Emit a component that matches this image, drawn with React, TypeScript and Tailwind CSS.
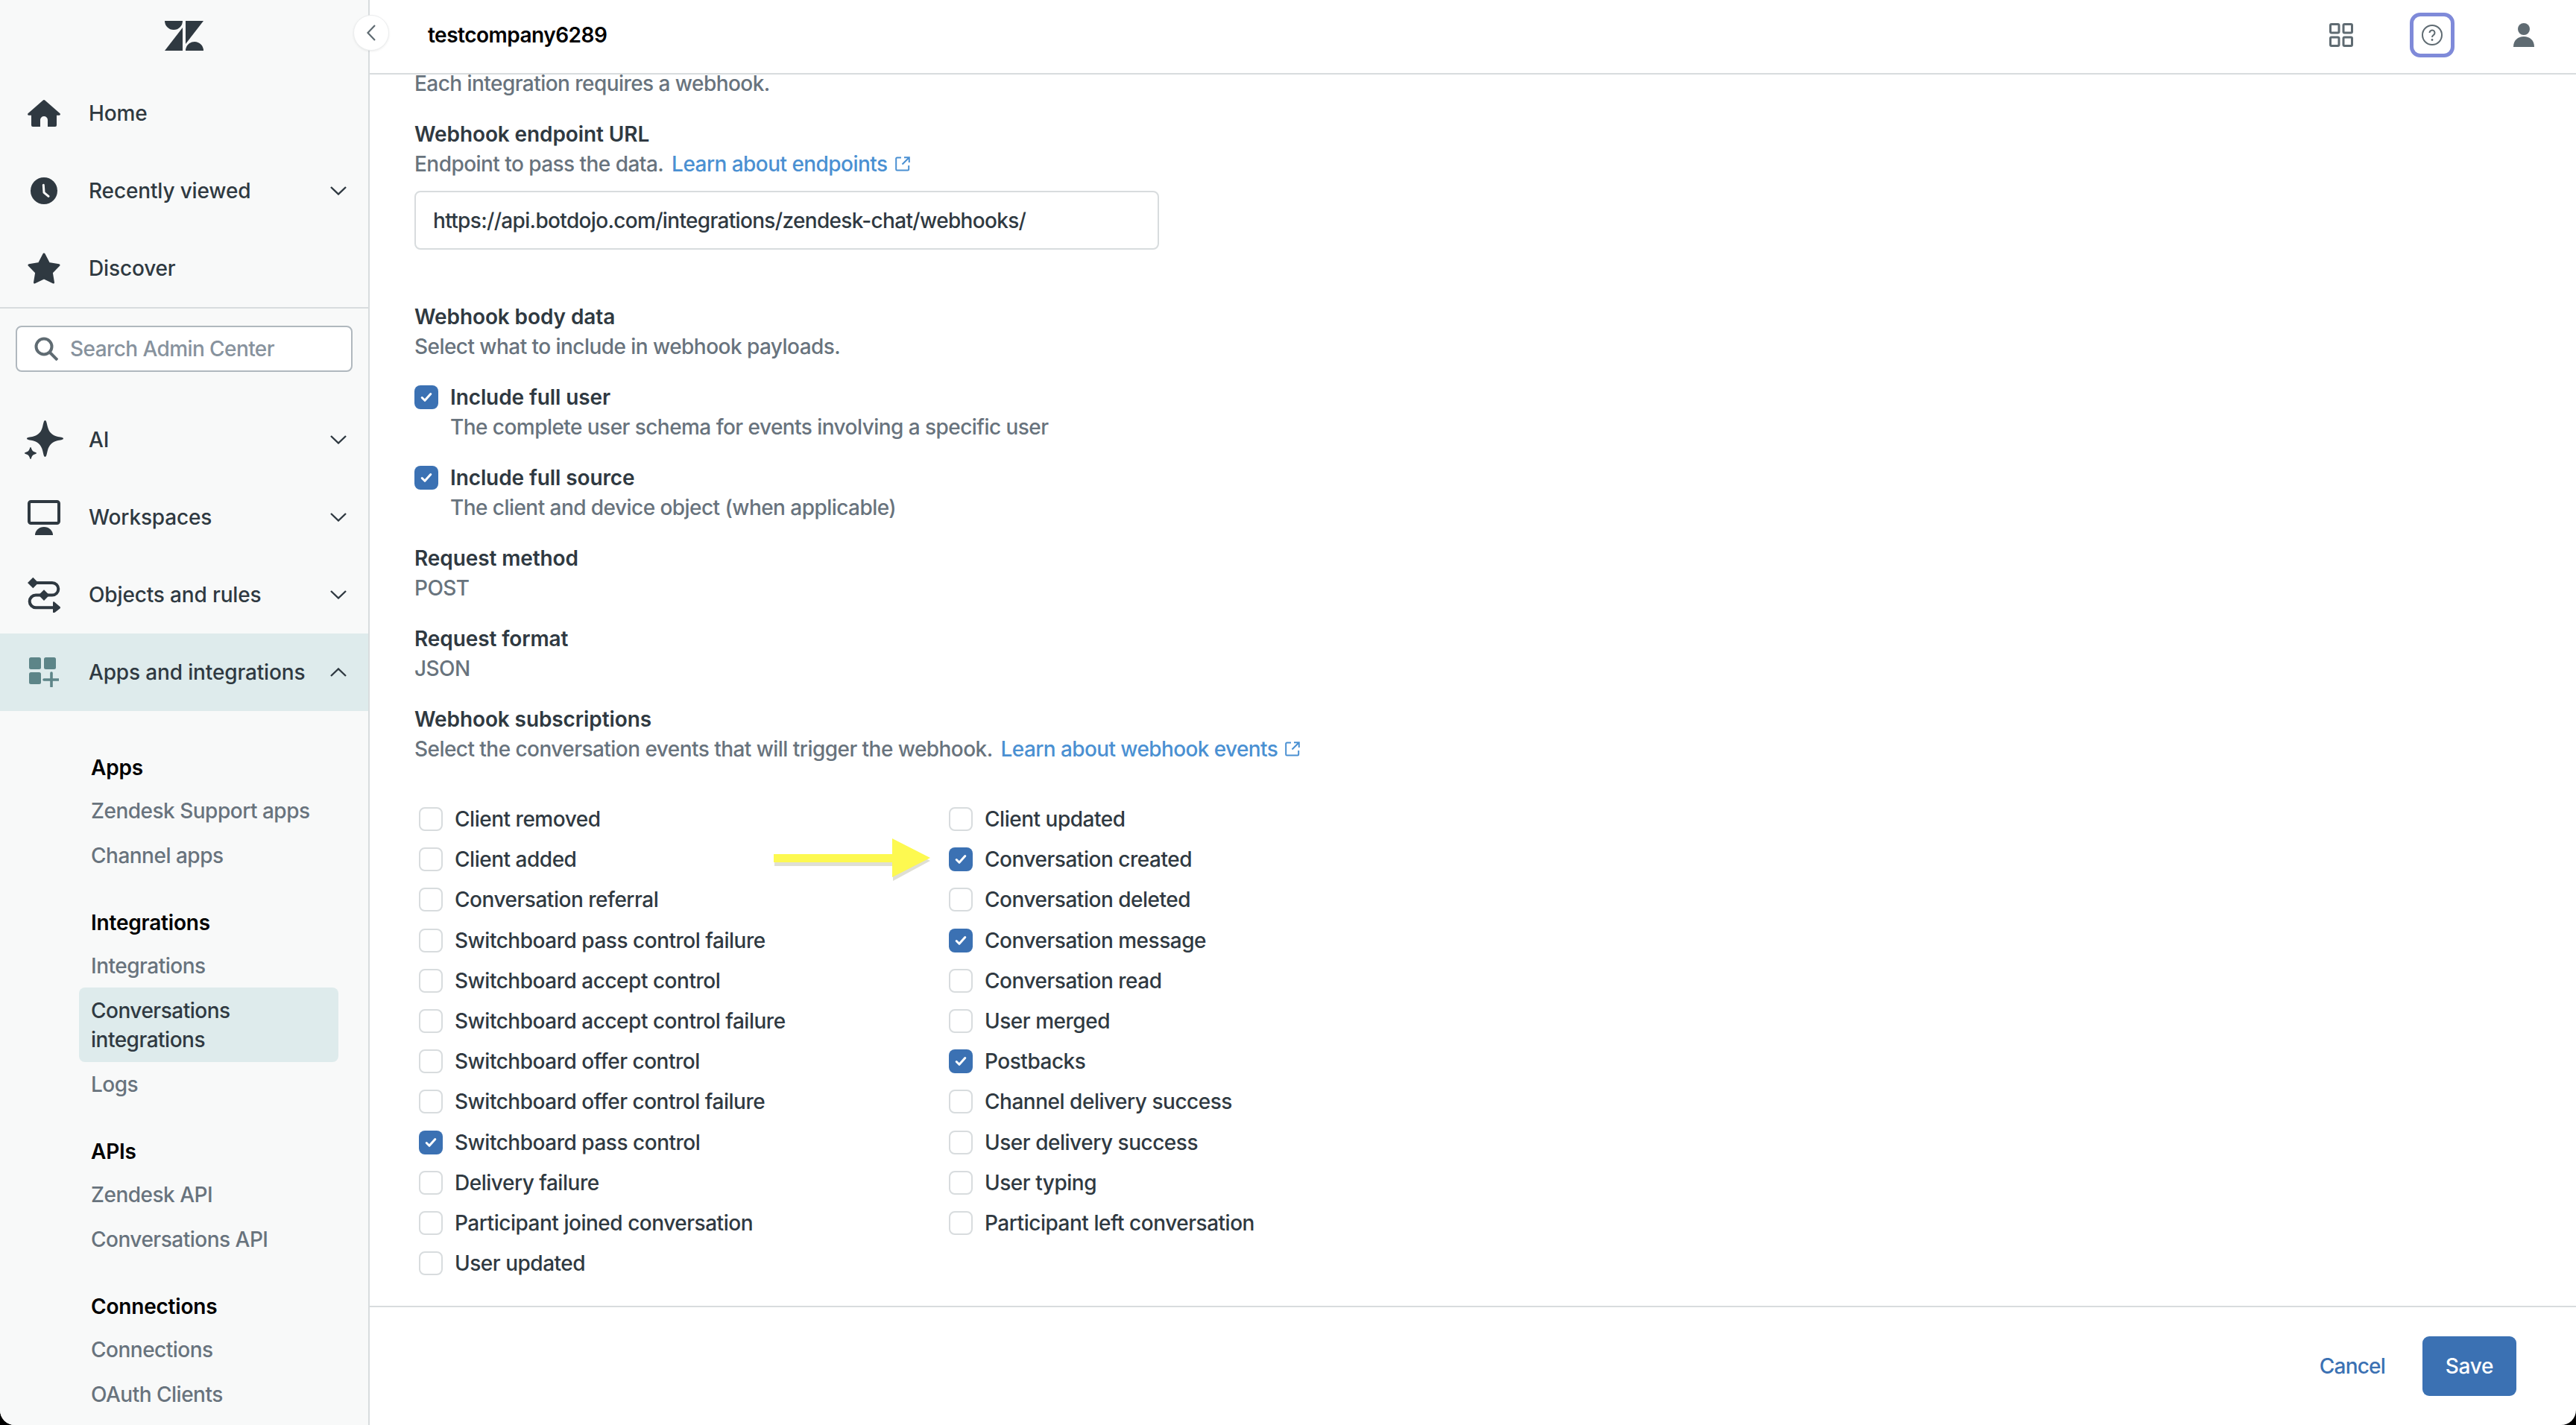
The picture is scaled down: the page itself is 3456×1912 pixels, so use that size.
import React from "react";

const Chevron = ({ up = false }: { up?: boolean }) => (
  <svg width="22" height="12" viewBox="0 0 22 12" fill="none" className="shrink-0">
    <path d={up ? "M1 11 11 1.5 21 11" : "M1 1 11 10.5 21 1"} stroke="#2f3941" strokeWidth="2.4" />
  </svg>
);

const HomeIcon = () => (
  <svg width="44" height="36" viewBox="0 0 44 36" fill="#2f3941">
    <path d="M20.5.7a2.2 2.2 0 0 1 3 0l20 17.6c.8.9.3 2.4-1 2.4H39V34a2 2 0 0 1-2 2H27V27a5 5 0 0 0-10 0v9H7a2 2 0 0 1-2-2V20.700H1.500c-1.300 0-1.800-1.500-1-2.400z" />
  </svg>
);
const ClockIcon = () => (
  <svg width="36" height="36" viewBox="0 0 36 36">
    <circle cx="18" cy="18" r="18" fill="#2f3941" />
    <path d="M17.300 10.300 18 20.300l6 5" stroke="#f8f9f9" strokeWidth="3" strokeLinecap="round" strokeLinejoin="round" fill="none" />
  </svg>
);
const StarIcon = () => (
  <svg width="44" height="42" viewBox="0 0 44 42" fill="#2f3941" stroke="#2f3941" strokeWidth="3" strokeLinejoin="round">
    <path d="M22 2 28.500 14.500 42 16.800 32.300 26.800 34.500 40 22 33.800 9.500 40 11.700 26.800 2 16.800 15.500 14.500Z" />
  </svg>
);
const SparkIcon = () => (
  <svg width="52" height="52" viewBox="0 0 52 52" fill="#2f3941">
    <path d="M27.500 0c1.800 0 2.200 4 3.500 9 1.600 6.400 5.800 11 12 12.600 5 1.200 9 1.200 9 2.900s-4 1.700-9 2.900C36.800 29 32.600 33.600 31 40c-1.300 5-1.700 9-3.500 9s-2.200-4-3.500-9c-1.600-6.400-5.800-11-12-12.600-5-1.200-9-1.200-9-2.900s4-1.700 9-2.900C18.200 20 22.400 15.400 24 9c1.300-5 1.700-9 3.500-9z" />
    <path d="M8 36c.8 0 1 1.500 1.600 3 .6 1.500 1.700 2.600 3.400 3.300 1.500.6 3 .9 3 1.700s-1.500 1.100-3 1.700c-1.700.7-2.800 1.800-3.400 3.300-.6 1.500-.8 3-1.600 3s-1-1.500-1.600-3C5.800 47.500 4.700 46.400 3 45.700 1.500 45.100 0 44.800 0 44s1.500-1.100 3-1.700c1.700-.7 2.800-1.800 3.400-3.300.6-1.500.8-3 1.600-3z" />
  </svg>
);
const MonitorIcon = () => (
  <svg width="44" height="47" viewBox="0 0 44 47" fill="none">
    <rect x="2" y="2" width="40" height="29" rx="2.500" stroke="#2f3941" strokeWidth="4" />
    <path d="M10 47a12 11 0 0 1 24 0z" fill="#2f3941" />
  </svg>
);
const RulesIcon = () => (
  <svg width="44" height="48" viewBox="0 0 44 48" fill="none">
    <path d="M7 8h26a8.300 8.300 0 0 1 0 16.600H11a8.300 8.300 0 0 0 0 16.600h24" stroke="#2f3941" strokeWidth="4" />
    <path d="M7.300 0.700 14.500 8l-7.200 7.300L0 8zM22 17.300l7.300 7.300L22 32l-7.300-7.400zM34 34.500c0-1 1-1.500 1.800-.9l7.600 6.400c.8.700.8 1.800 0 2.400l-7.600 6c-.8.600-1.800 0-1.800-.9z" fill="#2f3941" />
  </svg>
);
const AppsIcon = () => (
  <svg width="40" height="40" viewBox="0 0 40 40" fill="#5d8588">
    <rect width="16" height="16" rx="2.500" />
    <rect x="20" width="16" height="16" rx="2.500" />
    <rect y="20" width="16" height="16" rx="2.500" />
    <path d="M30 21v18M20 30h20" stroke="#5d8588" strokeWidth="3.600" strokeLinecap="round" />
  </svg>
);

const ExternalIcon = () => (
  <svg width="20" height="20" viewBox="0 0 20 20" fill="none" stroke="#4a90d2" strokeWidth="2" className="ml-[10px] shrink-0">
    <path d="M8 1.500H2.500a1.300 1.300 0 0 0-1.300 1.300v14.400a1.300 1.300 0 0 0 1.300 1.300h14.400a1.300 1.300 0 0 0 1.300-1.300V12" />
    <path d="M12 1.200h6.800V8M18.500 1.500l-9 9" />
  </svg>
);

const Check = () => (
  <svg width="16" height="14" viewBox="0 0 16 14" fill="none">
    <path d="M2.200 7.500 6 11.300 13.800 2.500" stroke="#fff" strokeWidth="3" strokeLinecap="round" strokeLinejoin="round" />
  </svg>
);

const Box = ({ on }: { on?: boolean }) =>
  on ? (
    <span className="flex h-[32px] w-[32px] shrink-0 items-center justify-center rounded-[8px] bg-[#3b71b3]">
      <Check />
    </span>
  ) : (
    <span className="h-[32px] w-[32px] shrink-0 rounded-[8px] border-2 border-[#d8dcde] bg-white" />
  );

const NavRow = ({ icon, label, chev, active, up }: { icon: React.ReactNode; label: string; chev?: boolean; active?: boolean; up?: boolean }) => (
  <div className={`flex h-[104px] items-center pr-[29px] tracking-[-0.15px] ${active ? "bg-[#deebec]" : ""}`}>
    <span className="flex w-[118px] shrink-0 items-center justify-center pr-[1px]">{icon}</span>
    <span className="ml-[1px] flex-1">{label}</span>
    {chev && <Chevron up={up} />}
  </div>
);

const SubGroup = ({ title, items, className = "" }: { title: string; items: string[]; className?: string }) => (
  <div className={className}>
    <div className="ml-[122px] h-[40px] font-semibold leading-[40px] tracking-[-0.2px] text-black">{title}</div>
    <div className="mt-[8px] tracking-[-0.5px]">
      {items.map((t) =>
        t === "Conversations integrations" ? (
          <div key={t} className="ml-[106px] -mt-px flex h-[100px] w-[348px] items-center rounded-[8px] bg-[#deebec] pl-[16px] pt-[2px] leading-[39px] text-[#2f3941]">
            <span>Conversations<br />integrations</span>
          </div>
        ) : (
          <div key={t} className="ml-[122px] h-[60px] leading-[60px] text-[#68737d]">{t}</div>
        ),
      )}
    </div>
  </div>
);

const left: [string, boolean?][] = [
  ["Client removed"],
  ["Client added"],
  ["Conversation referral"],
  ["Switchboard pass control failure"],
  ["Switchboard accept control"],
  ["Switchboard accept control failure"],
  ["Switchboard offer control"],
  ["Switchboard offer control failure"],
  ["Switchboard pass control", true],
  ["Delivery failure"],
  ["Participant joined conversation"],
  ["User updated"],
];
const right: [string, boolean?][] = [
  ["Client updated"],
  ["Conversation created", true],
  ["Conversation deleted"],
  ["Conversation message", true],
  ["Conversation read"],
  ["User merged"],
  ["Postbacks", true],
  ["Channel delivery success"],
  ["User delivery success"],
  ["User typing"],
  ["Participant left conversation"],
];

const Col = ({ rows, className = "" }: { rows: [string, boolean?][]; className?: string }) => (
  <div className={className}>
    {rows.map(([t, on]) => (
      <div key={t} className="flex h-[54.2px] items-center gap-[16px] tracking-[-0.48px] text-[#2f3941]">
        <Box on={on} />
        <span>{t}</span>
      </div>
    ))}
  </div>
);

const Label = ({ children, className = "" }: { children: React.ReactNode; className?: string }) => (
  <div className={`font-semibold leading-[40px] tracking-[-0.1px] text-[#2f3941] ${className}`}>{children}</div>
);
const Hint = ({ children, className = "" }: { children: React.ReactNode; className?: string }) => (
  <div className={`flex items-center leading-[40px] tracking-[-0.55px] text-[#68737d] ${className}`}>{children}</div>
);

export default function App() {
  return (
    <div className="h-[1912px] w-[3456px] overflow-hidden bg-black font-['Inter',sans-serif] text-[28px] font-[450]">
      <div className="relative flex h-full w-full overflow-hidden rounded-b-[20px] bg-white">
        <aside className="h-full w-[496px] shrink-0 overflow-hidden border-r-2 border-[#d8dcde] bg-[#f8f9f9] text-[#2f3941]">
          <div className="flex h-[100px] items-center justify-center pb-[4px]">
            <svg width="52" height="40" viewBox="0 0 52 40" fill="#2f3941">
              <path d="M0 0H24A12 12 0 0 1 0 0ZM24 9V40H0ZM28 31V0H52ZM28 40A12 12 0 0 1 52 40Z" />
            </svg>
          </div>
          <NavRow icon={<HomeIcon />} label="Home" />
          <NavRow icon={<ClockIcon />} label="Recently viewed" chev />
          <NavRow icon={<StarIcon />} label="Discover" />
          <div className="h-[126px] border-t-2 border-[#d8dcde] px-[21px] pt-[23px]">
            <div className="flex h-[62px] items-center rounded-[8px] border-2 border-[#b0b8be] bg-white pl-[23px] tracking-[-0.58px] text-[#87929d]">
              <svg width="32" height="32" viewBox="0 0 32 32" fill="none" stroke="#5f6b72" strokeWidth="4" className="mr-[16px] shrink-0">
                <circle cx="13" cy="13" r="10.500" />
                <path d="M21 21 31 31" />
              </svg>
              Search Admin Center
            </div>
          </div>
          <NavRow icon={<SparkIcon />} label="AI" chev />
          <NavRow icon={<MonitorIcon />} label="Workspaces" chev />
          <NavRow icon={<RulesIcon />} label="Objects and rules" chev />
          <NavRow icon={<AppsIcon />} label="Apps and integrations" chev active up />
          <SubGroup className="mt-[56px]" title="Apps" items={["Zendesk Support apps", "Channel apps"]} />
          <SubGroup className="mt-[40px]" title="Integrations" items={["Integrations", "Conversations integrations", "Logs"]} />
          <SubGroup className="mt-[40px]" title="APIs" items={["Zendesk API", "Conversations API"]} />
          <SubGroup className="mt-[40px]" title="Connections" items={["Connections", "OAuth Clients"]} />
        </aside>

        <main className="flex h-full min-w-0 flex-1 flex-col">
          <header className="flex h-[100px] shrink-0 items-center border-b-2 border-[#d8dcde] pb-[4px] pl-[78px] pr-[56px]">
            <span className="flex-1 font-semibold tracking-[-0.5px] text-black">testcompany6289</span>
            <svg width="32" height="32" viewBox="0 0 32 32" fill="none" stroke="#5f6b72" strokeWidth="3" className="mr-[76px]">
              <rect x="1.500" y="1.500" width="11.500" height="11.500" rx="1.500" />
              <rect x="19" y="1.500" width="11.500" height="11.500" rx="1.500" />
              <rect x="1.500" y="19" width="11.500" height="11.500" rx="1.500" />
              <rect x="19" y="19" width="11.500" height="11.500" rx="1.500" />
            </svg>
            <span className="mr-[79px] flex h-[60px] w-[60px] items-center justify-center rounded-[14px] border-[5px] border-[#7f8ad9]">
              <svg width="28" height="28" viewBox="0 0 28 28" fill="none" stroke="#5f6b72">
                <circle cx="14" cy="14" r="13" strokeWidth="2" />
                <path d="M10.500 11a3.500 3.500 0 1 1 5.500 2.900c-1.300.9-2 1.500-2 3" strokeWidth="2" />
                <circle cx="14" cy="20.500" r="1.400" fill="#5f6b72" stroke="none" />
              </svg>
            </span>
            <svg width="28" height="32" viewBox="0 0 28 32" fill="#5f6b72">
              <circle cx="14" cy="8" r="8" />
              <path d="M0 32c0-9 6-14 14-14s14 5 14 14z" />
            </svg>
          </header>

          <div className="min-h-0 flex-1 pl-[60px]">
            <Hint className="!leading-[25px]">Each integration requires a webhook.</Hint>
            <Label className="mt-[35px]">Webhook endpoint URL</Label>
            <Hint>
              Endpoint to pass the data.&nbsp;<span className="ml-[4px] text-[#4a90d2]">Learn about endpoints</span>
              <ExternalIcon />
            </Hint>
            <div className="mt-[16px] flex h-[79px] w-[999px] items-center rounded-[8px] border-2 border-[#d8dcde] pl-[23px] tracking-[-0.67px] text-[#2f3941]">
              https://api.botdojo.com/integrations/zendesk-chat/webhooks/
            </div>
            <Label className="mt-[70px]">Webhook body data</Label>
            <Hint>Select what to include in webhook payloads.</Hint>

            <div className="mt-[28px] flex gap-[16px]">
              <span className="pt-[4px]"><Box on /></span>
              <div>
                <Label>Include full user</Label>
                <Hint>The complete user schema for events involving a specific user</Hint>
              </div>
            </div>
            <div className="mt-[28px] flex gap-[16px]">
              <span className="pt-[4px]"><Box on /></span>
              <div>
                <Label>Include full source</Label>
                <Hint>The client and device object (when applicable)</Hint>
              </div>
            </div>

            <Label className="mt-[28px]">Request method</Label>
            <Hint>POST</Hint>
            <Label className="mt-[28px]">Request format</Label>
            <Hint>JSON</Hint>
            <Label className="mt-[28px]">Webhook subscriptions</Label>
            <Hint>
              Select the conversation events that will trigger the webhook.&nbsp;
              <span className="ml-[4px] tracking-[-0.6px] text-[#4a90d2]">Learn about webhook events</span>
              <ExternalIcon />
            </Hint>

            <div className="relative mt-[47px] flex pl-[6px]">
              <Col rows={left} className="w-[711px]" />
              <Col rows={right} />
              <svg width="216" height="60" viewBox="0 0 216 60" className="absolute left-[482px] top-[53px]">
                <path d="M2 25H161V3L211 28 161 55V35H2Z" fill="#b8b8a0" opacity="0.45" transform="translate(-1 2)" />
                <path d="M0 21H159V0L210 26 159 52V32H0Z" fill="#fdf950" />
              </svg>
            </div>
          </div>

          <footer className="flex h-[160px] shrink-0 items-start justify-end border-t-2 border-[#d8dcde] pr-[80px] pt-[39px]">
            <span className="mr-[50px] flex h-[80px] items-center tracking-[-0.8px] text-[#3b71b3]">Cancel</span>
            <span className="flex h-[80px] w-[126px] items-center justify-center rounded-[9px] bg-[#3b71b3] font-medium tracking-[-0.3px] text-white">Save</span>
          </footer>
        </main>

        <button className="absolute left-[474px] top-[20px] flex h-[48px] w-[48px] items-center justify-center rounded-full border border-[#eceeef] bg-white shadow-[0_1px_3px_rgba(0,0,0,0.08)]">
          <svg width="12" height="22" viewBox="0 0 12 22" fill="none" stroke="#5f6b72" strokeWidth="2.200">
            <path d="M11 1 1.500 11 11 21" />
          </svg>
        </button>
      </div>
    </div>
  );
}
